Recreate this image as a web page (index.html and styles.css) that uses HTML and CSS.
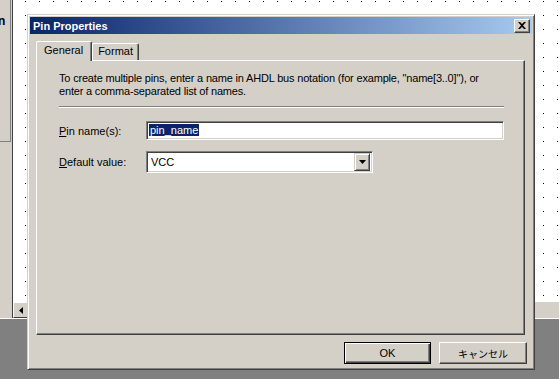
FILE: index.html
```html
<!DOCTYPE html>
<html lang="en">
<head>
    <meta charset="utf-8">
    <title>Pin Properties</title>
    <link rel="stylesheet" href="styles.css">
</head>
<body>
<div class="workspace">
    <div class="side-panel">
        <div class="side-box"><span class="side-label">n</span></div>
    </div>
    <div class="canvas-wrap">
        <div class="canvas"></div>
        <div class="hscroll">
            <div class="scroll-btn">
                <svg width="4" height="7" viewBox="0 0 4 7"><path d="M4 0 L4 7 L0 3.5 Z" fill="#000"/></svg>
            </div>
        </div>
    </div>
</div>

<div class="dialog">
    <div class="title-bar">
        <span class="title-text">Pin Properties</span>
        <div class="close-btn">
            <svg width="8" height="7" viewBox="0 0 8 7"><path d="M0 0h2l2 2 2-2h2L5 3.5 8 7H6L4 5 2 7H0l3-3.5z" fill="#000"/></svg>
        </div>
    </div>
    <div class="dialog-body">
        <div class="tabs">
            <div class="tab tab-active">General</div>
            <div class="tab">Format</div>
        </div>
        <div class="tab-panel">
            <p class="hint">To create multiple pins, enter a name in AHDL bus notation (for example, "name[3..0]"), or<br>enter a comma-separated list of names.</p>
            <div class="separator"></div>
            <div class="field-row">
                <label class="field-label"><u>P</u>in name(s):</label>
                <div class="edit-box"><span class="selected-text">pin_name</span></div>
            </div>
            <div class="field-row field-row-combo">
                <label class="field-label"><u>D</u>efault value:</label>
                <div class="combo-box">
                    <span class="combo-value">VCC</span>
                    <div class="combo-btn">
                        <svg width="7" height="4" viewBox="0 0 7 4"><path d="M0 0h7L3.5 4z" fill="#000"/></svg>
                    </div>
                </div>
            </div>
        </div>
        <div class="dialog-buttons">
            <div class="btn btn-default">OK</div>
            <div class="btn btn-cancel">キャンセル</div>
        </div>
    </div>
</div>
</body>
</html>
```

FILE: styles.css
```css
body {
    margin: 0;
    width: 559px;
    height: 379px;
    overflow: hidden;
    background-color: #808080;
    font-family: "Liberation Sans", Arial, sans-serif;
    font-size: 11px;
    color: #000;
}
.workspace {
    display: flex;
    height: 318px;
    border-bottom: 1px solid #fff;
    background-color: #d4d0c8;
}
.side-panel {
    width: 12px;
    background-color: #d4d0c8;
}
.side-box {
    width: 10px;
    height: 141px;
    border-right: 1px solid #808080;
    border-bottom: 1px solid #808080;
    overflow: hidden;
}
.side-label {
    display: block;
    margin: 14px 0 0 -2px;
    font-size: 12px;
    font-weight: bold;
}
.canvas-wrap {
    flex: 1;
    display: flex;
    flex-direction: column;
    border-left: 1px solid #404040;
}
.canvas {
    flex: 1;
    background-color: #fff;
    background-image: linear-gradient(to right, #fff 13px, transparent 13px),
                      linear-gradient(to bottom, #fff 13px, #000 13px);
    background-size: 14px 14px;
    background-position: -1px 2px;
}
.hscroll {
    height: 16px;
    display: flex;
    background-color: #d4d0c8;
}
.scroll-btn {
    width: 14px;
    height: 14px;
    border-top: 1px solid #fff;
    border-left: 1px solid #fff;
    border-right: 1px solid #404040;
    border-bottom: 1px solid #404040;
    display: flex;
    align-items: center;
    justify-content: center;
}

/* dialog window */
.dialog {
    position: absolute;
    left: 27px;
    top: 14px;
    width: 508px;
    height: 356px;
    box-sizing: border-box;
    padding: 2px;
    background-color: #d4d0c8;
    border: 1px solid;
    border-color: #d4d0c8 #404040 #404040 #d4d0c8;
    box-shadow: inset 1px 1px #fff, inset -1px -1px #808080;
    display: flex;
    flex-direction: column;
}
.title-bar {
    height: 17px;
    display: flex;
    align-items: center;
    justify-content: space-between;
    padding: 0 2px 0 3px;
    background: linear-gradient(to right, #0a246a, #a6caf0);
}
.title-text {
    color: #fff;
    font-weight: bold;
    font-size: 11px;
}
.close-btn {
    width: 14px;
    height: 12px;
    background-color: #d4d0c8;
    border: 1px solid;
    border-color: #fff #404040 #404040 #fff;
    box-shadow: inset -1px -1px #808080;
    display: flex;
    align-items: center;
    justify-content: center;
}
.dialog-body {
    flex: 1;
    display: flex;
    flex-direction: column;
    padding: 7px 6px 0 6px;
}
.tabs {
    display: flex;
    align-items: flex-end;
    height: 19px;
    padding-left: 1px;
}
.tab {
    height: 16px;
    padding: 0 5px 0 5px;
    line-height: 15px;
    border-top: 1px solid #fff;
    border-left: 1px solid #fff;
    border-right: 1px solid #404040;
    border-radius: 2px 2px 0 0;
    box-shadow: inset -1px 0 #808080;
}
.tab-active {
    height: 19px;
    margin: 0 -1px -1px -1px;
    padding: 0 8px 0 7px;
    line-height: 17px;
    position: relative;
    z-index: 1;
    background-color: #d4d0c8;
}
.tab-active + .tab {
    margin-left: 1px;
}
.tab-panel {
    height: 275px;
    box-sizing: border-box;
    margin-right: 1px;
    padding: 11px 20px 0 22px;
    border: 1px solid;
    border-color: #fff #404040 #404040 #fff;
    box-shadow: inset -1px -1px #808080;
}
.hint {
    margin: 0;
    line-height: 13px;
    letter-spacing: -0.18px;
}
.separator {
    margin-top: 8px;
    border-top: 1px solid #808080;
    border-bottom: 1px solid #fff;
}
.field-row {
    display: flex;
    align-items: center;
    margin-top: 13px;
}
.field-row-combo {
    margin-top: 11px;
}
.field-label {
    width: 87px;
    flex-shrink: 0;
}
.edit-box {
    flex: 1;
    height: 19px;
    box-sizing: border-box;
    background-color: #fff;
    border: 1px solid;
    border-color: #808080 #fff #fff #808080;
    box-shadow: inset 1px 1px #404040, inset -1px -1px #d4d0c8;
    padding: 2px 0 0 2px;
    line-height: 13px;
}
.selected-text {
    background-color: #0a246a;
    color: #fff;
    padding: 0 1px;
}
.combo-box {
    width: 227px;
    height: 22px;
    box-sizing: border-box;
    background-color: #fff;
    border: 1px solid;
    border-color: #808080 #fff #fff #808080;
    box-shadow: inset 1px 1px #404040, inset -1px -1px #d4d0c8;
    padding: 2px;
    display: flex;
    align-items: center;
    justify-content: space-between;
}
.combo-value {
    padding-left: 2px;
}
.combo-btn {
    width: 14px;
    height: 16px;
    background-color: #d4d0c8;
    border: 1px solid;
    border-color: #d4d0c8 #404040 #404040 #d4d0c8;
    box-shadow: inset 1px 1px #fff, inset -1px -1px #808080;
    display: flex;
    align-items: center;
    justify-content: center;
}
.dialog-buttons {
    display: flex;
    justify-content: flex-end;
    gap: 8px;
    margin-top: 7px;
    margin-right: -1px;
}
.btn {
    width: 88px;
    height: 22px;
    box-sizing: border-box;
    display: flex;
    align-items: center;
    justify-content: center;
    border: 1px solid;
    border-color: #fff #404040 #404040 #fff;
    box-shadow: inset -1px -1px #808080;
}
.btn-default {
    width: 87px;
    border-color: #000;
    box-shadow: inset 1px 1px #fff, inset -1px -1px #404040, inset -2px -2px #808080;
}
.btn-cancel {
    font-family: "Noto Sans CJK JP", sans-serif;
    font-size: 10px;
}
```
